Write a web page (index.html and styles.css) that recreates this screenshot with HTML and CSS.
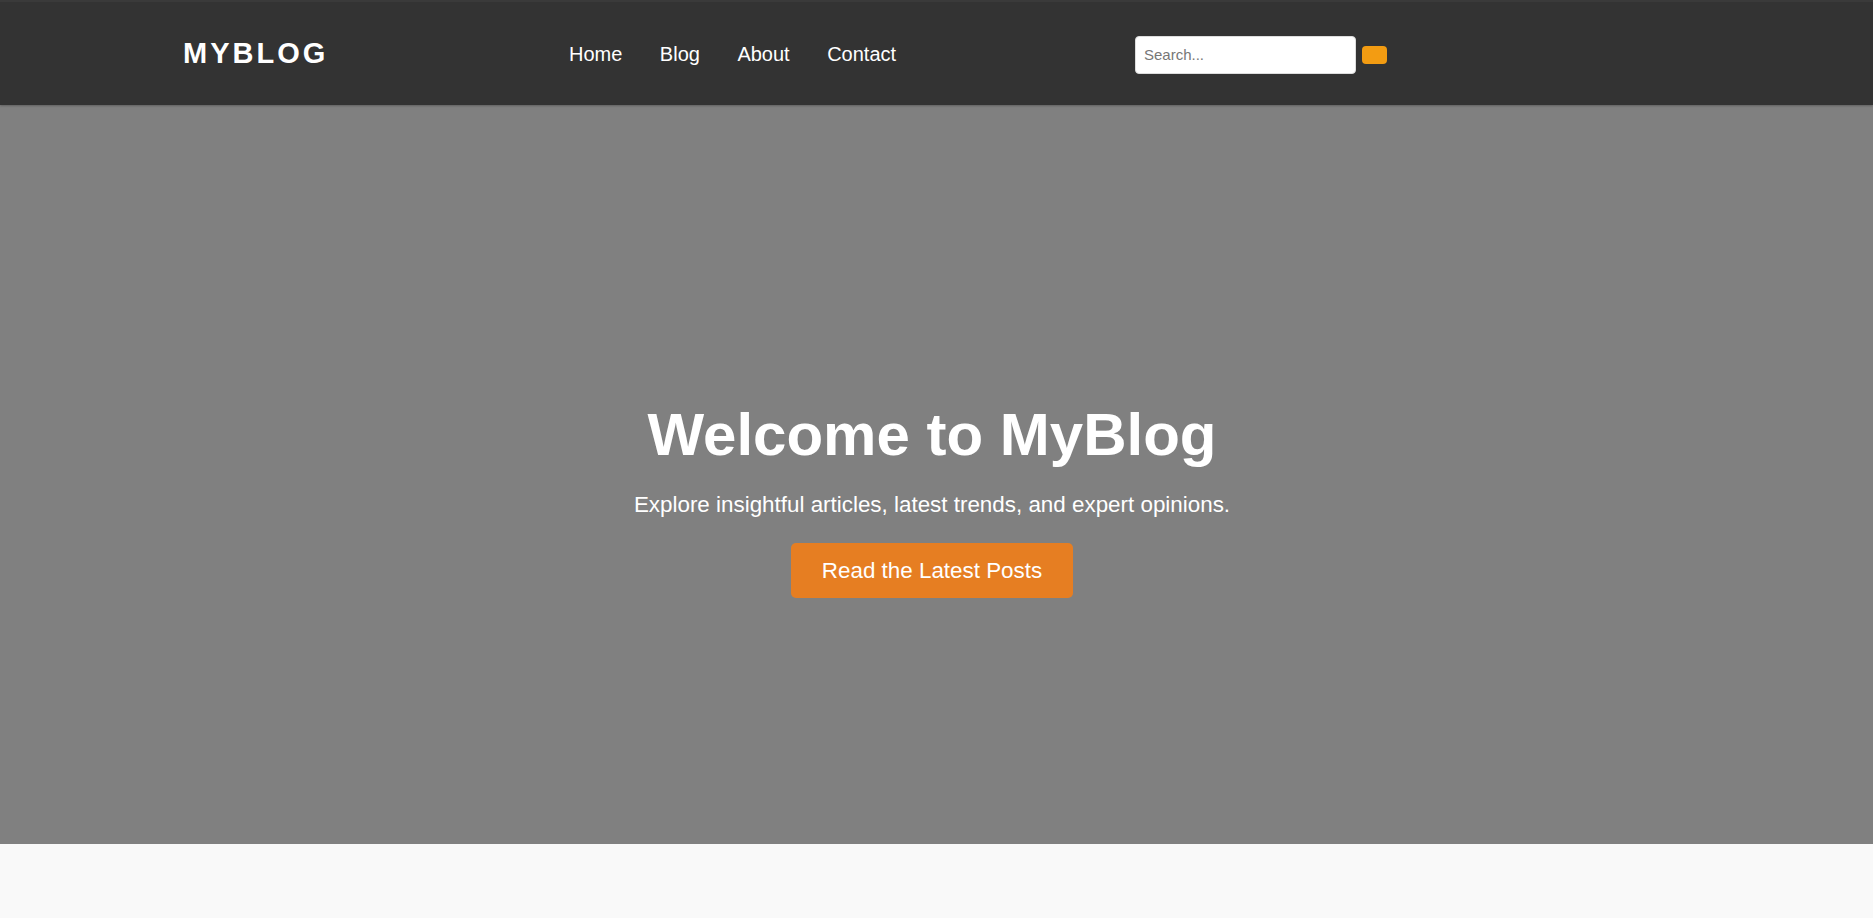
FILE: index.html
```html
<!DOCTYPE html>
<html lang="en">
<head>
<meta charset="utf-8">
<title>MyBlog</title>
<link rel="stylesheet" href="styles.css">
</head>
<body>
<header class="site-header">
  <div class="logo">MYBLOG</div>
  <nav class="main-nav">
    <a href="#">Home</a>
    <a href="#">Blog</a>
    <a href="#">About</a>
    <a href="#">Contact</a>
  </nav>
  <form class="search-form">
    <input class="search-input" type="text" placeholder="Search...">
    <button class="search-btn" type="button"></button>
  </form>
</header>
<section class="hero">
  <h1 class="hero-title">Welcome to MyBlog</h1>
  <p class="hero-text">Explore insightful articles, latest trends, and expert opinions.</p>
  <a class="hero-btn" href="#">Read the Latest Posts</a>
</section>
</body>
</html>
```
FILE: styles.css
```css
* { box-sizing: border-box; }
html, body {
  margin: 0;
  padding: 0;
}
body {
  background: #f9f9f9;
  font-family: "Liberation Sans", Arial, sans-serif;
  color: #333;
  height: 918px;
  overflow: hidden;
}
.site-header {
  height: 105px;
  background: #333;
  display: flex;
  align-items: center;
  padding-left: 183px;
  gap: 242px;
  border-top: 2px solid #3a3a3a;
  box-shadow: 0 1px 2px rgba(0,0,0,0.25);
  position: relative;
  z-index: 1;
}
.logo {
  color: #fff;
  font-size: 29px;
  font-weight: bold;
  letter-spacing: 3px;
  width: 144px;
  white-space: nowrap;
}
.main-nav {
  display: flex;
  gap: 37.5px;
  width: 324px;
  margin-top: 2px;
}
.main-nav a {
  color: #fff;
  text-decoration: none;
  font-size: 20px;
}
.search-form {
  display: flex;
  align-items: center;
  gap: 6px;
  margin-top: 2px;
}
.search-input {
  width: 221px;
  height: 38px;
  padding: 8px 8px;
  border: 1px solid #ddd;
  border-radius: 4px;
  font-family: "Liberation Sans", Arial, sans-serif;
  font-size: 15px;
  color: #333;
  background: #fff;
}
.search-input::placeholder { color: #777; }
.search-btn {
  width: 25px;
  height: 18px;
  border: none;
  border-radius: 4px;
  background: #f39c12;
  padding: 0;
}
.hero {
  height: 739px;
  background: #808080;
  display: flex;
  flex-direction: column;
  align-items: center;
  justify-content: center;
  padding-top: 50px;
  padding-right: 9px;
  text-align: center;
  color: #fff;
}
.hero-title {
  margin: 0;
  font-size: 60px;
  font-weight: bold;
  line-height: 67px;
}
.hero-text {
  margin: 24px 0 26px;
  font-size: 22.4px;
  line-height: 25px;
}
.hero-btn {
  display: inline-block;
  background: #e67e22;
  color: #fff;
  text-decoration: none;
  font-size: 22.4px;
  line-height: 25px;
  padding: 15px 31px;
  border-radius: 5px;
}
```
